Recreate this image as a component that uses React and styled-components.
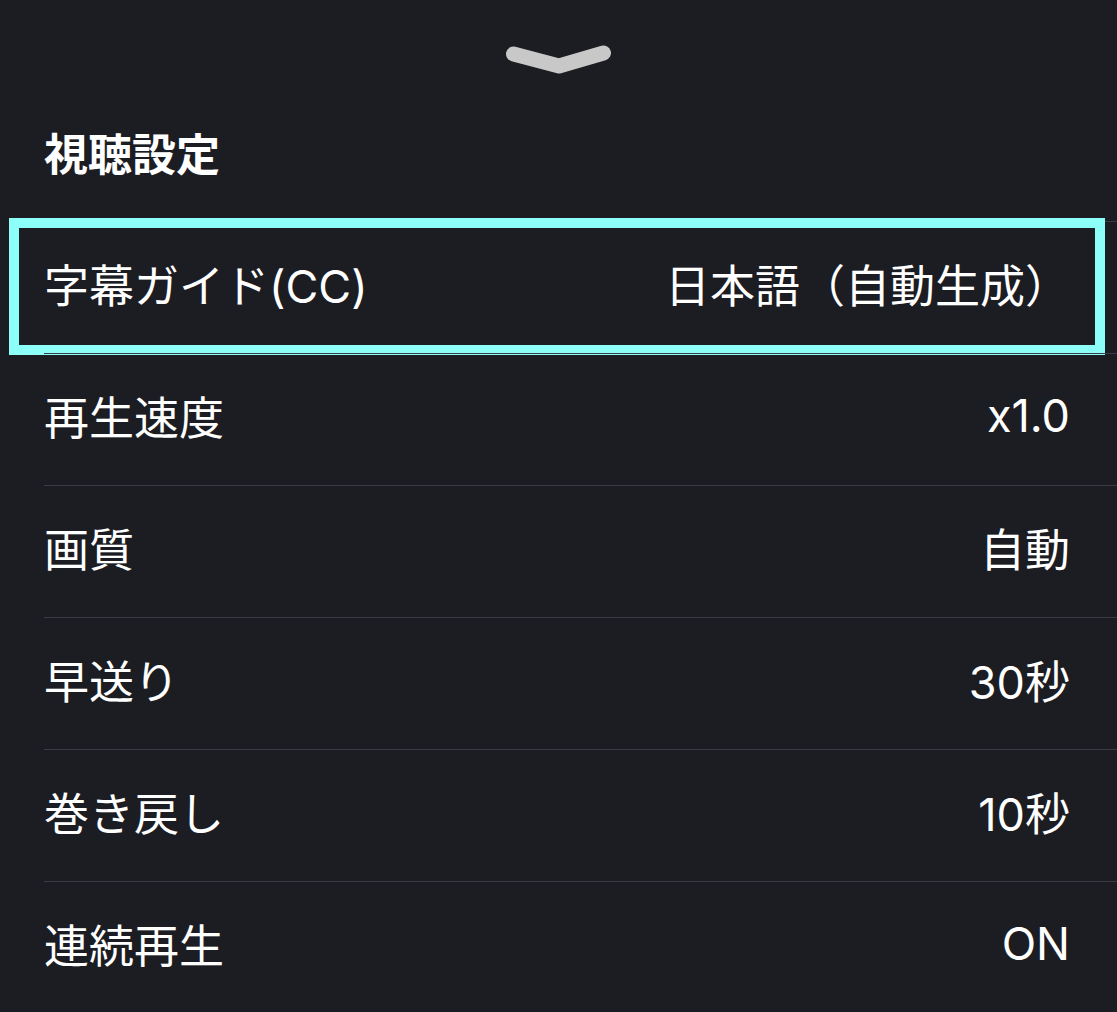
import React from "react";
import styled, { createGlobalStyle } from "styled-components";

const GlobalStyle = createGlobalStyle`
  html, body {
    margin: 0;
    padding: 0;
    background: #1c1d22;
  }
  body {
    font-family: Inter, "Noto Sans CJK JP", sans-serif;
    color: #ffffff;
  }
`;

const Sheet = styled.div`
  width: 1117px;
  height: 1012px;
  overflow: hidden;
  background: #1c1d22;
  display: flex;
  flex-direction: column;
`;

const HandleBar = styled.div`
  display: flex;
  justify-content: center;
  padding-top: 38px;
  height: 40px;
`;

const Heading = styled.h2`
  margin: 42px 0 0 44px;
  height: 64px;
  font-size: 44px;
  line-height: 64px;
  font-weight: 700;
  font-family: "Noto Sans CJK JP", sans-serif;
  color: #ffffff;
`;

const List = styled.ul`
  list-style: none;
  margin: 37px 0 0 44px;
  padding: 0;
  display: flex;
  flex-direction: column;
`;

const Row = styled.li`
  position: relative;
  box-sizing: border-box;
  height: 132px;
  border-top: 1px solid #3a3b46;
  display: flex;
  align-items: center;
  justify-content: space-between;
  padding: 0 47px 9px 0;
  font-size: 45px;
  font-weight: 400;
  color: #ffffff;

  ${(p) =>
    p.$focused &&
    `
    &::after {
      content: "";
      position: absolute;
      left: -35px;
      right: 12px;
      top: -4px;
      bottom: -2px;
      border: 10px solid #8cfff8;
      pointer-events: none;
    }
  `}
`;

const Label = styled.span`
  white-space: nowrap;
`;

const Value = styled.span`
  white-space: nowrap;
  text-align: right;
`;

const Chevron = () => (
  <svg width="120" height="40" viewBox="0 0 120 40">
    <polyline
      points="14.5,16 60,28 104.5,15"
      fill="none"
      stroke="#c8c8c8"
      strokeWidth="15"
      strokeLinecap="round"
      strokeLinejoin="round"
    />
  </svg>
);

const settings = [
  { label: "字幕ガイド(CC)", value: "日本語（自動生成）", focused: true },
  { label: "再生速度", value: "x1.0" },
  { label: "画質", value: "自動" },
  { label: "早送り", value: "30秒" },
  { label: "巻き戻し", value: "10秒" },
  { label: "連続再生", value: "ON" },
];

export default function App() {
  return (
    <>
      <GlobalStyle />
      <Sheet>
        <HandleBar>
          <Chevron />
        </HandleBar>
        <Heading>視聴設定</Heading>
        <List>
          {settings.map((s) => (
            <Row key={s.label} $focused={s.focused}>
              <Label>{s.label}</Label>
              <Value>{s.value}</Value>
            </Row>
          ))}
        </List>
      </Sheet>
    </>
  );
}
